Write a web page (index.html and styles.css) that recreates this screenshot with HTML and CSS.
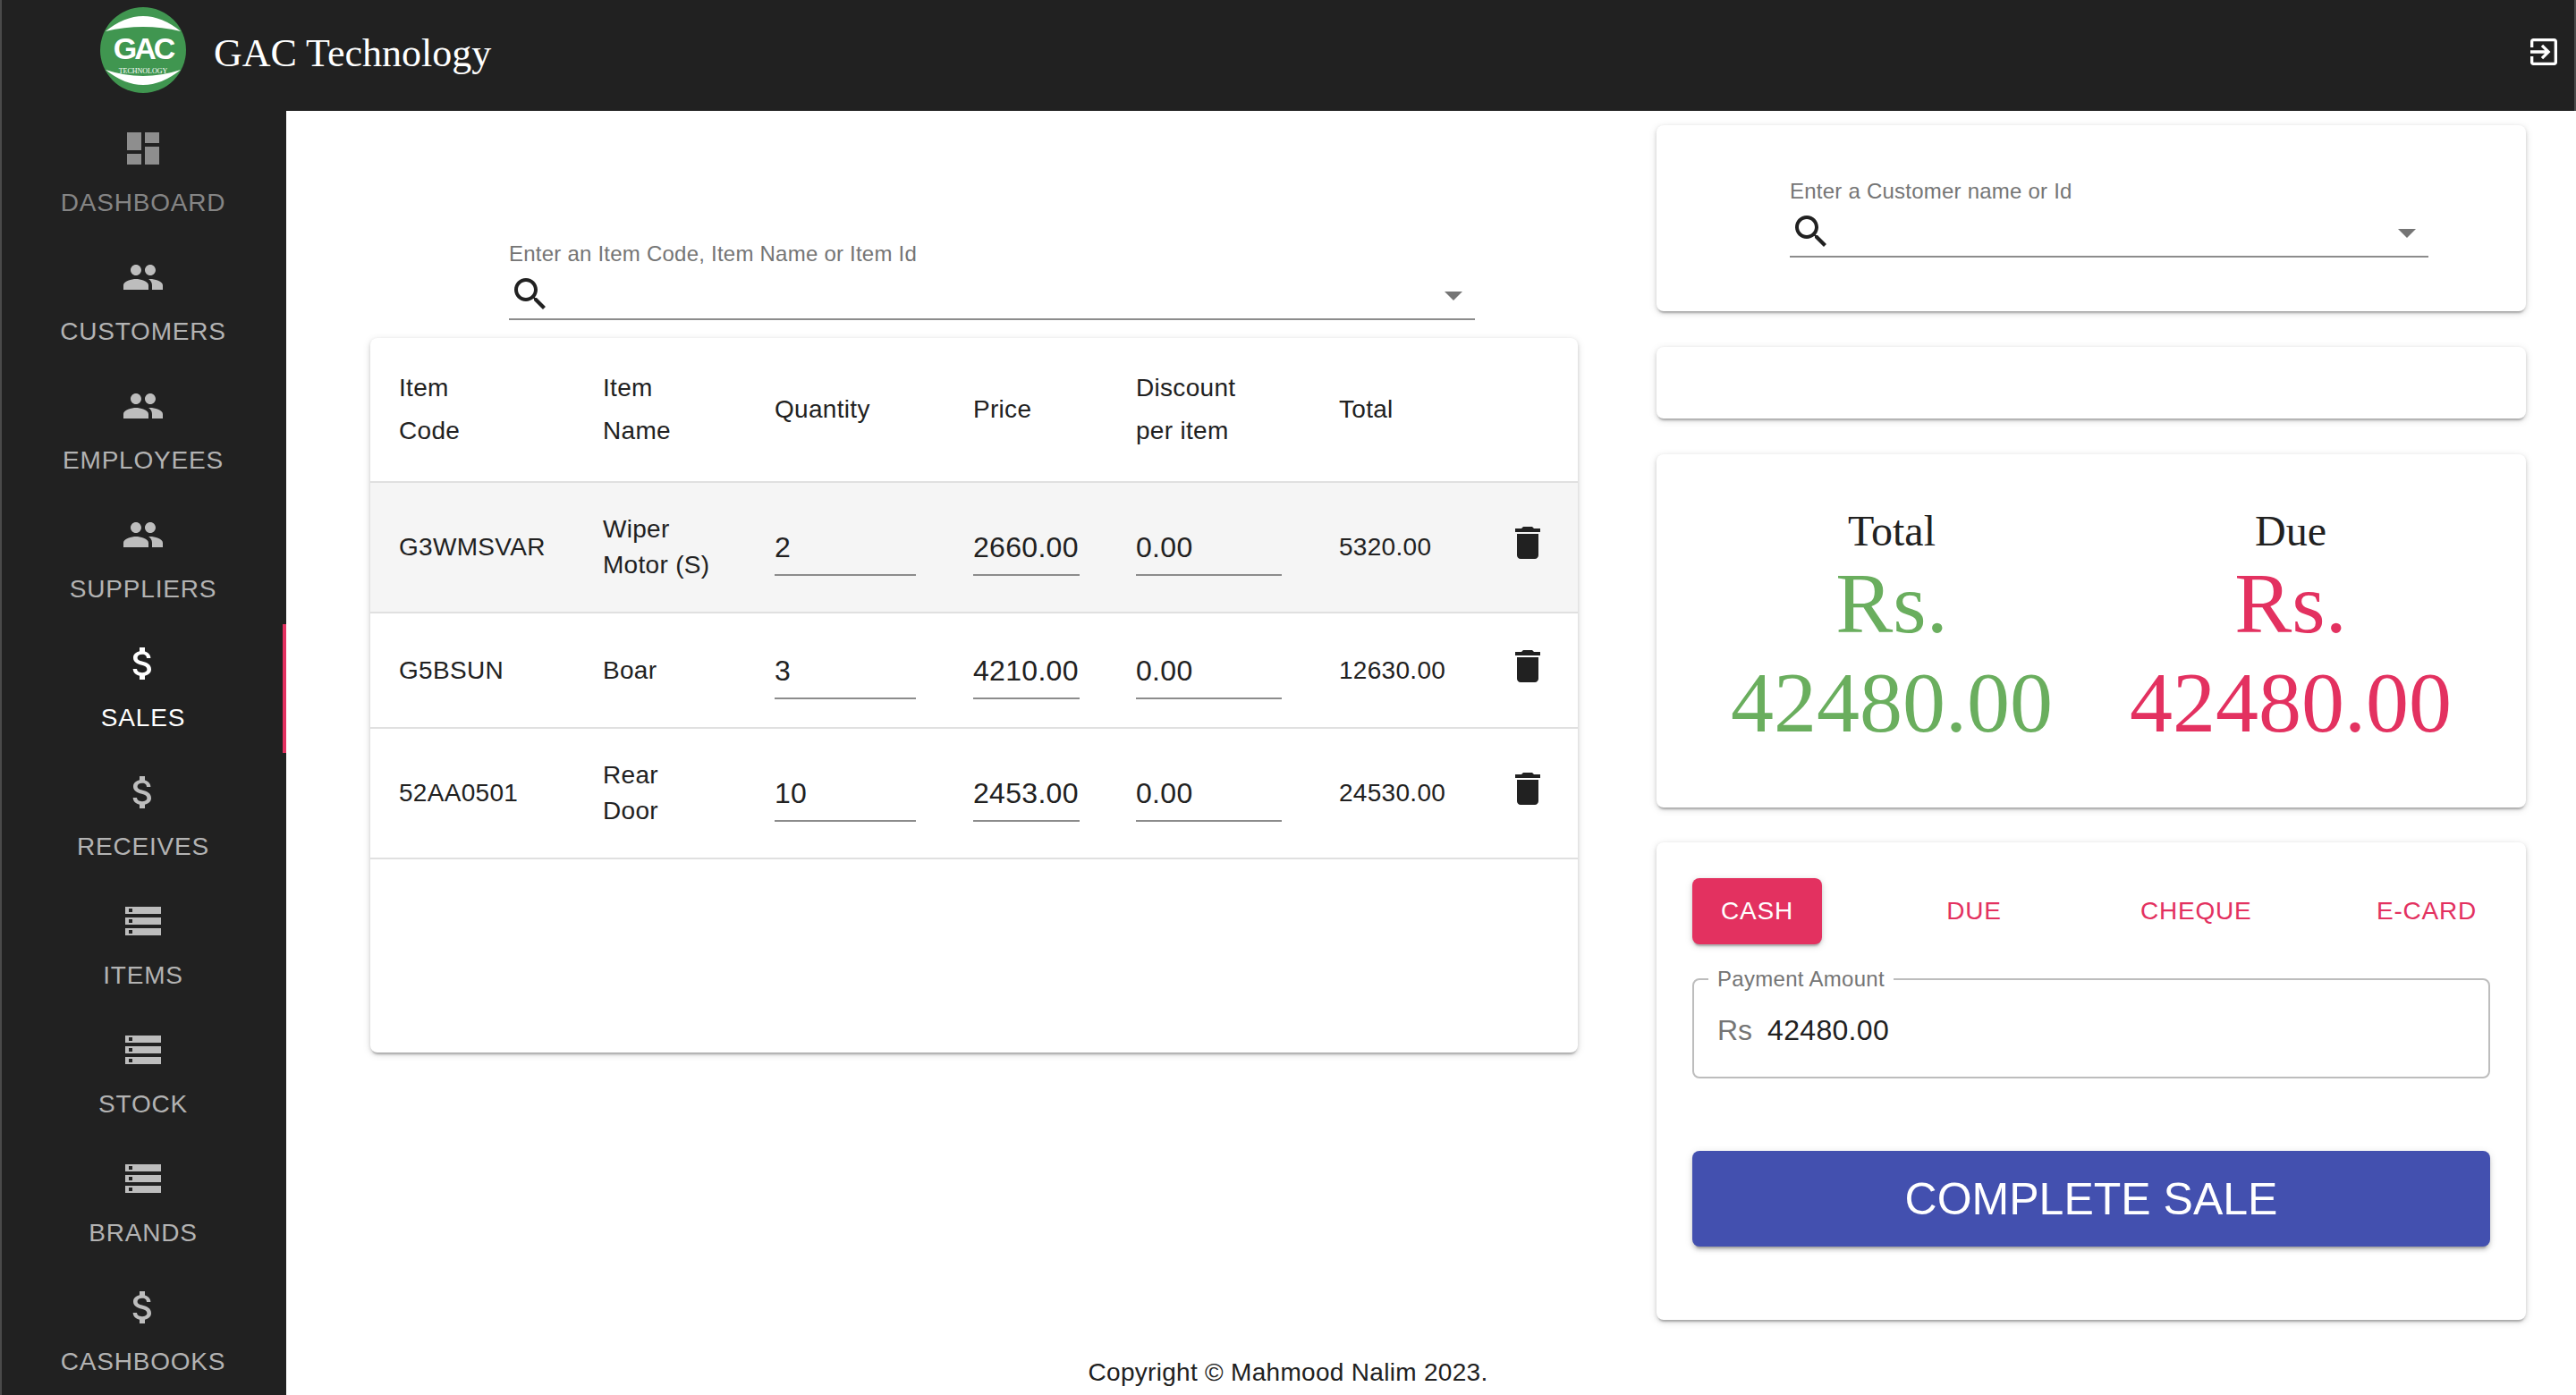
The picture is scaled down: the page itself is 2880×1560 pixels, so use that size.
FILE: index.html
```html
<!DOCTYPE html>
<html lang="en">
<head>
    <meta charset="UTF-8">
    <title>GAC Technology</title>
    <link rel="stylesheet" href="styles.css">
</head>
<body>
    <svg class="sprites" width="0" height="0">
        <symbol id="i-dashboard" viewBox="0 0 24 24"><path d="M3 13h8V3H3v10zm0 8h8v-6H3v6zm10 0h8V11h-8v10zm0-18v6h8V3h-8z"/></symbol>
        <symbol id="i-people" viewBox="0 0 24 24"><path d="M16 11c1.66 0 2.99-1.34 2.99-3S17.66 5 16 5c-1.66 0-3 1.34-3 3s1.34 3 3 3zm-8 0c1.66 0 2.99-1.34 2.99-3S9.66 5 8 5C6.34 5 5 6.34 5 8s1.34 3 3 3zm0 2c-2.33 0-7 1.17-7 3.5V19h14v-2.5c0-2.33-4.67-3.5-7-3.5zm8 0c-.29 0-.62.02-.97.05 1.16.84 1.97 1.97 1.97 3.45V19h6v-2.5c0-2.33-4.67-3.5-7-3.5z"/></symbol>
        <symbol id="i-money" viewBox="0 0 24 24"><path d="M11.8 10.9c-2.27-.59-3-1.2-3-2.15 0-1.09 1.01-1.85 2.7-1.85 1.78 0 2.44.85 2.5 2.1h2.21c-.07-1.72-1.12-3.3-3.21-3.81V3h-3v2.16c-1.94.42-3.5 1.68-3.5 3.61 0 2.31 1.91 3.46 4.7 4.13 2.5.6 3 1.48 3 2.41 0 .69-.49 1.79-2.7 1.79-2.06 0-2.87-.92-2.98-2.1h-2.2c.12 2.19 1.76 3.42 3.68 3.83V21h3v-2.15c1.95-.37 3.5-1.5 3.5-3.55 0-2.84-2.43-3.81-4.7-4.4z"/></symbol>
        <symbol id="i-storage" viewBox="0 0 24 24"><path d="M2 20h20v-4H2v4zm2-3h2v2H4v-2zM2 4v4h20V4H2zm4 3H4V5h2v2zm-4 7h20v-4H2v4zm2-3h2v2H4v-2z"/></symbol>
        <symbol id="i-search" viewBox="0 0 24 24"><path d="M15.5 14h-.79l-.28-.27C15.41 12.59 16 11.11 16 9.5 16 5.91 13.09 3 9.5 3S3 5.91 3 9.5 5.91 16 9.5 16c1.61 0 3.09-.59 4.23-1.57l.27.28v.79l5 4.99L20.49 19l-4.99-5zm-6 0C7.01 14 5 11.99 5 9.5S7.01 5 9.5 5 14 7.01 14 9.5 11.99 14 9.5 14z"/></symbol>
        <symbol id="i-arrow" viewBox="0 0 24 24"><path d="M7 10l5 5 5-5z"/></symbol>
        <symbol id="i-delete" viewBox="0 0 24 24"><path d="M6 19c0 1.1.9 2 2 2h8c1.1 0 2-.9 2-2V7H6v12zM19 4h-3.5l-1-1h-5l-1 1H5v2h14V4z"/></symbol>
        <symbol id="i-exit" viewBox="0 0 24 24"><path d="M10.09 15.59L11.5 17l5-5-5-5-1.41 1.41L12.67 11H3v2h9.67l-2.58 2.59zM19 3H5c-1.11 0-2 .9-2 2v4h2V5h14v14H5v-4H3v4c0 1.1.89 2 2 2h14c1.1 0 2-.9 2-2V5c0-1.1-.9-2-2-2z"/></symbol>
    </svg>

    <header class="topbar">
        <svg class="logo" viewBox="0 0 96 96">
            <circle cx="48" cy="48" r="48" fill="#409650"/>
            <path d="M6 27 Q48 -7 90 27 Q48 17 6 27z" fill="#fff"/>
            <path d="M6 70 Q48 84 90 70 Q48 104 6 70z" fill="#fff"/>
            <text class="logo-gac" x="48" y="58" text-anchor="middle">GAC</text>
            <text class="logo-tech" x="48" y="74" text-anchor="middle">TECHNOLOGY</text>
        </svg>
        <h1 class="brand">GAC Technology</h1>
        <svg class="logout"><use href="#i-exit"/></svg>
    </header>

    <div class="layout">
        <nav class="sidebar">
            <a class="nav-item muted"><svg><use href="#i-dashboard"/></svg><span>Dashboard</span></a>
            <a class="nav-item"><svg><use href="#i-people"/></svg><span>Customers</span></a>
            <a class="nav-item"><svg><use href="#i-people"/></svg><span>Employees</span></a>
            <a class="nav-item"><svg><use href="#i-people"/></svg><span>Suppliers</span></a>
            <a class="nav-item active"><svg><use href="#i-money"/></svg><span>Sales</span></a>
            <a class="nav-item"><svg><use href="#i-money"/></svg><span>Receives</span></a>
            <a class="nav-item"><svg><use href="#i-storage"/></svg><span>Items</span></a>
            <a class="nav-item"><svg><use href="#i-storage"/></svg><span>Stock</span></a>
            <a class="nav-item"><svg><use href="#i-storage"/></svg><span>Brands</span></a>
            <a class="nav-item"><svg><use href="#i-money"/></svg><span>Cashbooks</span></a>
        </nav>

        <main class="content">
            <section class="left-col">
                <div class="search item-search">
                    <label>Enter an Item Code, Item Name or Item Id</label>
                    <div class="search-line">
                        <svg class="search-icon"><use href="#i-search"/></svg>
                        <svg class="search-arrow"><use href="#i-arrow"/></svg>
                    </div>
                </div>

                <div class="card cart">
                    <table>
                        <thead>
                            <tr>
                                <th class="c-code">Item<br>Code</th>
                                <th class="c-name">Item<br>Name</th>
                                <th class="c-qty">Quantity</th>
                                <th class="c-price">Price</th>
                                <th class="c-disc">Discount<br>per item</th>
                                <th class="c-total">Total</th>
                                <th></th>
                            </tr>
                        </thead>
                        <tbody>
                            <tr class="selected">
                                <td>G3WMSVAR</td>
                                <td>Wiper<br>Motor (S)</td>
                                <td><span class="cell-input qty">2</span></td>
                                <td><span class="cell-input price">2660.00</span></td>
                                <td><span class="cell-input disc">0.00</span></td>
                                <td>5320.00</td>
                                <td class="c-del"><svg><use href="#i-delete"/></svg></td>
                            </tr>
                            <tr class="short">
                                <td>G5BSUN</td>
                                <td>Boar</td>
                                <td><span class="cell-input qty">3</span></td>
                                <td><span class="cell-input price">4210.00</span></td>
                                <td><span class="cell-input disc">0.00</span></td>
                                <td>12630.00</td>
                                <td class="c-del"><svg><use href="#i-delete"/></svg></td>
                            </tr>
                            <tr>
                                <td>52AA0501</td>
                                <td>Rear<br>Door</td>
                                <td><span class="cell-input qty">10</span></td>
                                <td><span class="cell-input price">2453.00</span></td>
                                <td><span class="cell-input disc">0.00</span></td>
                                <td>24530.00</td>
                                <td class="c-del"><svg><use href="#i-delete"/></svg></td>
                            </tr>
                        </tbody>
                    </table>
                </div>
            </section>

            <section class="right-col">
                <div class="card customer-card">
                    <div class="search customer-search">
                        <label>Enter a Customer name or Id</label>
                        <div class="search-line">
                            <svg class="search-icon"><use href="#i-search"/></svg>
                            <svg class="search-arrow"><use href="#i-arrow"/></svg>
                        </div>
                    </div>
                </div>

                <div class="card empty-card"></div>

                <div class="card totals-card">
                    <div class="amount">
                        <div class="amount-label">Total</div>
                        <div class="amount-value green">Rs. 42480.00</div>
                    </div>
                    <div class="amount">
                        <div class="amount-label">Due</div>
                        <div class="amount-value pink">Rs. 42480.00</div>
                    </div>
                </div>

                <div class="card payment-card">
                    <div class="tabs">
                        <button class="tab selected-tab">Cash</button>
                        <button class="tab">Due</button>
                        <button class="tab">Cheque</button>
                        <button class="tab">E-Card</button>
                    </div>
                    <fieldset class="pay-field">
                        <legend>Payment Amount</legend>
                        <span class="pay-prefix">Rs</span>
                        <span class="pay-value">42480.00</span>
                    </fieldset>
                    <button class="complete">Complete Sale</button>
                </div>
            </section>
        </main>
    </div>

    <footer class="copyright">Copyright © Mahmood Nalim 2023.</footer>
</body>
</html>
```

FILE: styles.css
```css
* {
    box-sizing: border-box;
}
html, body {
    height: 100%;
}
body {
    position: relative;
    margin: 0;
    height: 1560px;
    overflow: hidden;
    background-color: #fff;
    color: #212121;
    font-family: "Liberation Sans", Arial, sans-serif;
}
.sprites {
    position: absolute;
}

/* top bar */
.topbar {
    display: flex;
    align-items: center;
    height: 124px;
    padding: 0 14px 12px 112px;
    background-color: #212121;
    border-left: 2px solid #4a4a4a;
    border-right: 2px solid #4a4a4a;
}
.logo {
    width: 96px;
    height: 96px;
    margin-left: -2px;
}
.logo-gac {
    font: bold 34px "Liberation Sans", Arial, sans-serif;
    letter-spacing: -3px;
    fill: #fff;
}
.logo-tech {
    font: 8px "Liberation Serif", serif;
    fill: #fff;
}
.brand {
    margin: 8px 0 0 31px;
    color: #fff;
    font: 400 44px/1.2 "Liberation Serif", "Times New Roman", serif;
}
.logout {
    width: 40px;
    height: 40px;
    margin-left: auto;
    margin-top: 4px;
    fill: #fff;
}

/* sidebar */
.layout {
    display: flex;
    height: 1436px;
}
.sidebar {
    flex: 0 0 320px;
    display: flex;
    flex-direction: column;
    margin-top: -2px;
    background-color: #212121;
    border-left: 2px solid #4a4a4a;
}
.nav-item {
    flex: 0 0 144px;
    display: flex;
    flex-direction: column;
    align-items: center;
    padding: 20px 2px 0 0;
    color: #b3b3b3;
    font-size: 28px;
    line-height: 49px;
    letter-spacing: 0.8px;
    text-transform: uppercase;
}
.nav-item svg {
    width: 48px;
    height: 48px;
    margin-bottom: 12px;
    fill: #bdbdbd;
}
.nav-item.muted {
    color: #858585;
}
.nav-item.muted svg {
    fill: #8e8e8e;
}
.nav-item.active {
    color: #fff;
    box-shadow: inset -4px 0 0 #e33160;
}
.nav-item.active svg {
    fill: #fff;
}

/* content */
.content {
    flex: 1;
    display: flex;
}
.left-col {
    width: 1444px;
    padding: 0 0 0 94px;
}
.right-col {
    width: 972px;
    margin-left: 88px;
    padding-top: 16px;
}
.card {
    background-color: #fff;
    border-radius: 8px;
    box-shadow: 0 4px 2px -2px rgba(0, 0, 0, 0.2), 0 2px 4px 0 rgba(0, 0, 0, 0.14), 0 2px 10px 0 rgba(0, 0, 0, 0.12);
}

/* autocomplete boxes */
.search label {
    display: block;
    color: #757575;
    font-size: 24px;
    line-height: 28px;
    letter-spacing: 0.23px;
}
.search-line {
    display: flex;
    justify-content: space-between;
    height: 52px;
    margin-top: 8px;
    border-bottom: 2px solid #8c8c8c;
}
.search-icon {
    width: 48px;
    height: 48px;
    margin-top: -1px;
    fill: #212121;
}
.search-arrow {
    width: 48px;
    height: 48px;
    fill: #757575;
}
.item-search {
    width: 1080px;
    margin: 146px 0 20px 155px;
}
.customer-search {
    width: 714px;
}

/* cart table */
.cart {
    width: 1350px;
    height: 799px;
    overflow: hidden;
}
table {
    width: 100%;
    border-collapse: collapse;
    table-layout: fixed;
    font-size: 28px;
    letter-spacing: 0.3px;
}
th {
    height: 161px;
    padding: 0 0 0 32px;
    font-weight: 400;
    line-height: 48px;
    text-align: left;
    border-bottom: 2px solid #e0e0e0;
}
td {
    height: 146px;
    padding: 0 0 0 32px;
    line-height: 40px;
    border-bottom: 2px solid #e0e0e0;
}
tr.short td {
    height: 129px;
}
tr.selected td {
    background-color: #f5f5f5;
}
.c-code { width: 228px; }
.c-name { width: 192px; }
.c-qty { width: 222px; }
.c-price { width: 182px; }
.c-disc { width: 227px; }
.c-total { width: 200px; }
.cell-input {
    display: block;
    height: 60px;
    padding-top: 8px;
    font-size: 32px;
    line-height: 40px;
    border-bottom: 2px solid #8c8c8c;
    margin-top: 4px;
}
.cell-input.qty { width: 158px; }
.cell-input.price { width: 119px; }
.cell-input.disc { width: 163px; }
.c-del svg {
    display: block;
    width: 48px;
    height: 48px;
    margin: -10px 0 0 -13px;
    fill: #212121;
}

/* right column */
.customer-card {
    height: 208px;
    padding: 60px 0 0 149px;
}
.empty-card {
    height: 80px;
    margin-top: 40px;
}
.totals-card {
    display: flex;
    height: 395px;
    margin-top: 40px;
    padding: 60px 0 0 40px;
    font-family: "Liberation Serif", "Times New Roman", serif;
    text-align: center;
}
.amount {
    width: 446px;
}
.amount-label {
    font-size: 48px;
    line-height: 51px;
}
.amount-value {
    font-size: 96px;
    line-height: 111px;
}
.green {
    color: #6aae5e;
}
.pink {
    color: #e33160;
}
.payment-card {
    height: 534px;
    margin-top: 39px;
    padding: 40px 40px 0;
}
.tabs {
    display: grid;
    grid-template-columns: 251px 218px 264px auto;
    height: 74px;
}
.tab {
    justify-self: start;
    min-width: 128px;
    height: 74px;
    padding: 0 32px;
    color: #e33160;
    background: none;
    border: none;
    border-radius: 8px;
    font: 28px/1 "Liberation Sans", Arial, sans-serif;
    letter-spacing: 0.8px;
    text-transform: uppercase;
    white-space: nowrap;
}
.selected-tab {
    color: #fff;
    background-color: #e33160;
    box-shadow: 0 4px 2px -2px rgba(0, 0, 0, 0.2), 0 2px 4px 0 rgba(0, 0, 0, 0.14), 0 2px 10px 0 rgba(0, 0, 0, 0.12);
}
.pay-field {
    display: flex;
    height: 123px;
    margin: 27px 0 0;
    padding: 25px 26px 0;
    border: 2px solid #bdbdbd;
    border-radius: 8px;
}
.pay-field legend {
    padding: 0 10px;
    margin-left: -10px;
    color: #757575;
    font-size: 24px;
    line-height: 24px;
    letter-spacing: 0.3px;
}
.pay-prefix {
    color: #757575;
    font-size: 32px;
    line-height: 40px;
}
.pay-value {
    margin-left: 17px;
    font-size: 32px;
    line-height: 40px;
    letter-spacing: 0.3px;
}
.complete {
    display: block;
    width: 100%;
    height: 107px;
    margin-top: 81px;
    color: #fff;
    background-color: #4350af;
    border: none;
    border-radius: 8px;
    font: 50px/1 "Liberation Sans", Arial, sans-serif;
    text-transform: uppercase;
    box-shadow: 0 6px 2px -4px rgba(0, 0, 0, 0.2), 0 4px 4px 0 rgba(0, 0, 0, 0.14), 0 2px 10px 0 rgba(0, 0, 0, 0.12);
}

/* sits over the bottom of the content area, centred on the window */
.copyright {
    position: absolute;
    left: 0;
    right: 0;
    bottom: 8px;
    color: #212121;
    font-size: 28px;
    line-height: 34px;
    letter-spacing: 0.3px;
    text-align: center;
}
```
